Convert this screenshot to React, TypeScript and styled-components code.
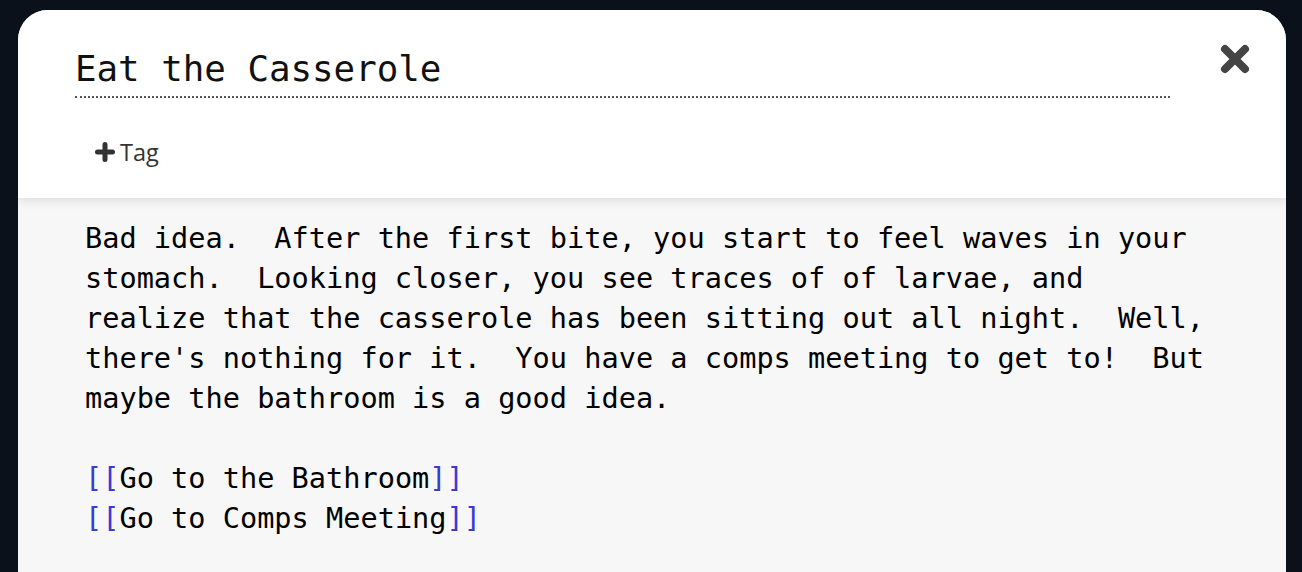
import React from "react";
import styled, { createGlobalStyle } from "styled-components";

const Global = createGlobalStyle`
  html, body { margin: 0; padding: 0; background: #0b111b; overflow: hidden; }
  body { font-family: "DejaVu Sans Mono", monospace; }
`;

const Page = styled.div`
  padding: 10px 16px 0 18px;
  height: 572px;
  box-sizing: border-box;
  display: flex;
`;

const Modal = styled.div`
  width: 1268px;
  flex: 1;
  border-radius: 30px 30px 0 0;
  overflow: hidden;
  background: #f7f7f7;
  display: flex;
  flex-direction: column;
`;

const Header = styled.div`
  background: #fff;
  height: 188px;
  flex-shrink: 0;
  box-sizing: border-box;
  padding: 34px 36px 0 57px;
  display: flex;
  flex-direction: column;
  position: relative;
  z-index: 1;
  box-shadow: 0 2px 10px rgba(0, 0, 0, 0.12);
`;

const TitleRow = styled.div`
  display: flex;
  align-items: flex-start;
  justify-content: space-between;
`;

const Title = styled.div`
  width: 1095px;
  font-family: "DejaVu Sans Mono", monospace;
  font-size: 35.8px;
  line-height: 50px;
  color: #111;
  border-bottom: 2px dotted #555;
  padding-bottom: 2px;
`;

const CloseButton = styled.button`
  border: none;
  background: none;
  padding: 0;
  margin-top: 0px;
  width: 30px;
  height: 30px;
  cursor: pointer;
  display: flex;
`;

const TagButton = styled.button`
  margin-top: 38px;
  margin-left: 20px;
  align-self: flex-start;
  border: none;
  background: none;
  padding: 0;
  display: flex;
  align-items: center;
  gap: 5px;
  font-family: "Open Sans", sans-serif;
  font-size: 23.5px;
  color: #333;
  cursor: pointer;
`;

const Body = styled.div`
  padding: 20px 40px 0 67px;
  font-family: "DejaVu Sans Mono", monospace;
  font-size: 28.6px;
  line-height: 40px;
  color: #000;
  white-space: pre-wrap;
`;

const Bracket = styled.span`
  color: #3a3ad6;
`;

const Para = styled.div`
  margin-bottom: 40px;
`;

const Link: React.FC<{ text: string }> = ({ text }) => (
  <div>
    <Bracket>[[</Bracket>
    {text}
    <Bracket>]]</Bracket>
  </div>
);

export default function App() {
  return (
    <>
      <Global />
      <Page>
        <Modal>
          <Header>
            <TitleRow>
              <Title>Eat the Casserole</Title>
              <CloseButton aria-label="close">
                <svg width="30" height="30" viewBox="0 0 30 30">
                  <path
                    d="M5 5 L25 25 M25 5 L5 25"
                    stroke="#444"
                    strokeWidth="8"
                    strokeLinecap="round"
                  />
                </svg>
              </CloseButton>
            </TitleRow>
            <TagButton>
              <svg width="20" height="20" viewBox="0 0 20 20">
                <path
                  d="M10 2.5 V17.5 M2.5 10 H17.5"
                  stroke="#333"
                  strokeWidth="5"
                  strokeLinecap="round"
                />
              </svg>
              Tag
            </TagButton>
          </Header>
          <Body>
            <Para>
              {"Bad idea.  After the first bite, you start to feel waves in your\nstomach.  Looking closer, you see traces of of larvae, and\nrealize that the casserole has been sitting out all night.  Well,\nthere's nothing for it.  You have a comps meeting to get to!  But\nmaybe the bathroom is a good idea."}
            </Para>
            <Link text="Go to the Bathroom" />
            <Link text="Go to Comps Meeting" />
          </Body>
        </Modal>
      </Page>
    </>
  );
}
